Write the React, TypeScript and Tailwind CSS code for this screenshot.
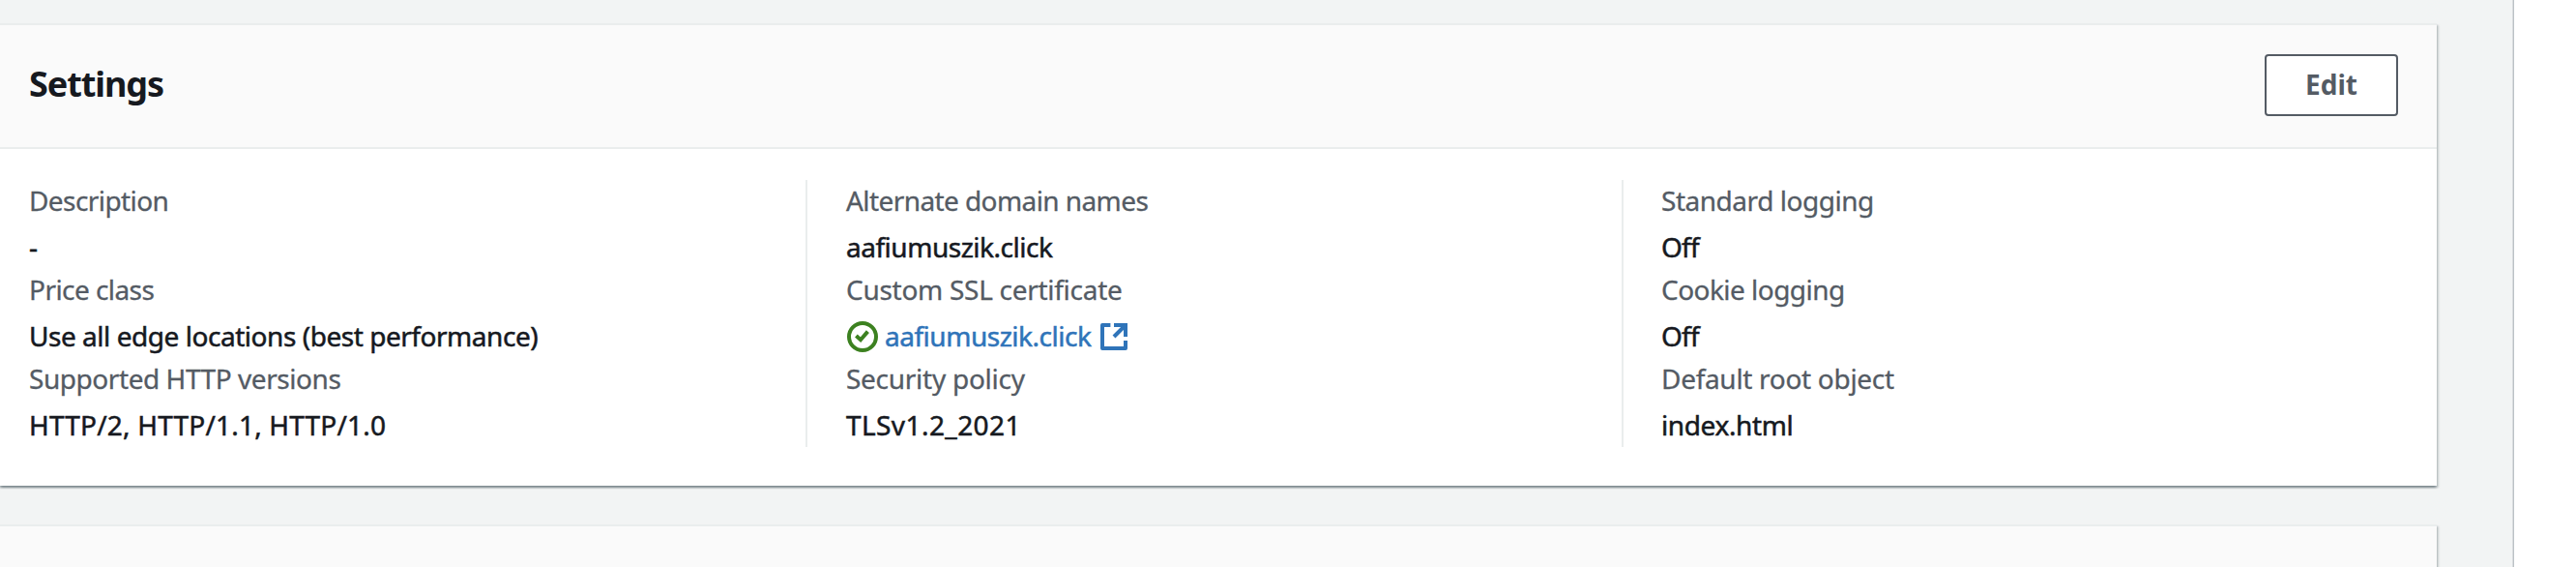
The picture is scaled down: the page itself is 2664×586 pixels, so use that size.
import type { ReactNode } from "react";

type Entry = { label: string; labelClass: string; value: ReactNode };

function CheckCircleIcon() {
  return (
    <svg viewBox="0 0 16 16" className="size-8 shrink-0" fill="none" stroke="#3c8120" strokeWidth="2">
      <circle cx="8" cy="8" r="7" />
      <path d="M4.7 7.5L7 9.6l3.7-4.3" />
    </svg>
  );
}

function ExternalIcon() {
  return (
    <svg viewBox="0 0 16 16" className="size-8 shrink-0" fill="none" stroke="#2f74b9" strokeWidth="2">
      <path d="M6.2 2H2v12h12v-4" strokeLinejoin="round" />
      <path d="M8 2h6v6" />
      <path d="M14 2L8 8" />
    </svg>
  );
}

const columns: Entry[][] = [
  [
    { label: "Description", labelClass: "tracking-[-0.58px]", value: "-" },
    {
      label: "Price class",
      labelClass: "tracking-[-0.56px]",
      value: <span className="tracking-[-0.46px]">Use all edge locations (best performance)</span>,
    },
    {
      label: "Supported HTTP versions",
      labelClass: "tracking-[-0.44px]",
      value: <span className="tracking-[0.2px]">HTTP/2, HTTP/1.1, HTTP/1.0</span>,
    },
  ],
  [
    {
      label: "Alternate domain names",
      labelClass: "tracking-[-0.58px]",
      value: <span className="tracking-[-0.48px]">aafiumuszik.click</span>,
    },
    {
      label: "Custom SSL certificate",
      labelClass: "tracking-[-0.28px]",
      value: (
        <span className="flex h-[44px] items-start">
          <span className="mt-[6px] ml-px flex">
            <CheckCircleIcon />
          </span>
          <a className="ml-[7px] tracking-[-0.48px] text-[#2f74b9]">aafiumuszik.click</a>
          <span className="mt-[6px] ml-[8px] flex">
            <ExternalIcon />
          </span>
        </span>
      ),
    },
    {
      label: "Security policy",
      labelClass: "tracking-[-0.27px]",
      value: <span className="tracking-[0.42px]">TLSv1.2_2021</span>,
    },
  ],
  [
    {
      label: "Standard logging",
      labelClass: "tracking-[-0.47px]",
      value: <span className="tracking-[-0.8px]">Off</span>,
    },
    {
      label: "Cookie logging",
      labelClass: "tracking-[-0.54px]",
      value: <span className="tracking-[-0.8px]">Off</span>,
    },
    {
      label: "Default root object",
      labelClass: "tracking-[-0.3px]",
      value: <span className="tracking-[-0.38px]">index.html</span>,
    },
  ],
];

const columnClasses = [
  "w-[833px] pl-[30px]",
  "w-[844px] border-l-2 border-[#eaeded] pl-10",
  "flex-1 border-l-2 border-[#eaeded] pl-[39px]",
];

const cardClass =
  "w-[2520px] shrink-0 bg-white shadow-[0_2px_2px_0_rgba(0,28,36,0.3),2px_2px_2px_0_rgba(0,28,36,0.15),-2px_2px_2px_0_rgba(0,28,36,0.15)]";

export default function App() {
  return (
    <div className="flex h-[586px] w-[2664px] overflow-hidden bg-white font-['Noto_Sans',sans-serif] text-[28px] leading-[42px] text-[#16191f]">
      <main className="flex w-[2600px] flex-col gap-10 overflow-hidden border-r border-[#bcc2c6] bg-[#f2f4f4] pt-6 shadow-[inset_-1px_0_0_0_#d9dddf]">
        <section className={cardClass}>
          <header className="flex h-[130px] items-start justify-between border-y-2 border-[#eaeded] bg-[#fafafa] pr-10 pl-[30px]">
            <h2 className="mt-[38px] text-[36px] leading-[46px] font-bold tracking-[-1.07px]">Settings</h2>
            <button className="mt-[30px] flex h-16 w-[138px] items-start justify-center rounded-[4px] border-2 border-[#545b64] bg-white pt-[8px] font-bold text-[#545b64]">
              Edit
            </button>
          </header>
          <div className="flex pt-8 pb-10">
            {columns.map((entries, i) => (
              <dl key={i} className={columnClasses[i]}>
                {entries.map((entry) => (
                  <div key={entry.label}>
                    <dt className={`mb-1 h-[44px] text-[#545b64] [-webkit-text-stroke:0.3px] ${entry.labelClass}`}>
                      {entry.label}
                    </dt>
                    <dd className="h-[44px] [-webkit-text-stroke:0.5px]">{entry.value}</dd>
                  </div>
                ))}
              </dl>
            ))}
          </div>
        </section>
        <section className={cardClass}>
          <header className="h-[130px] border-y-2 border-[#eaeded] bg-[#fafafa]" />
        </section>
      </main>
    </div>
  );
}
